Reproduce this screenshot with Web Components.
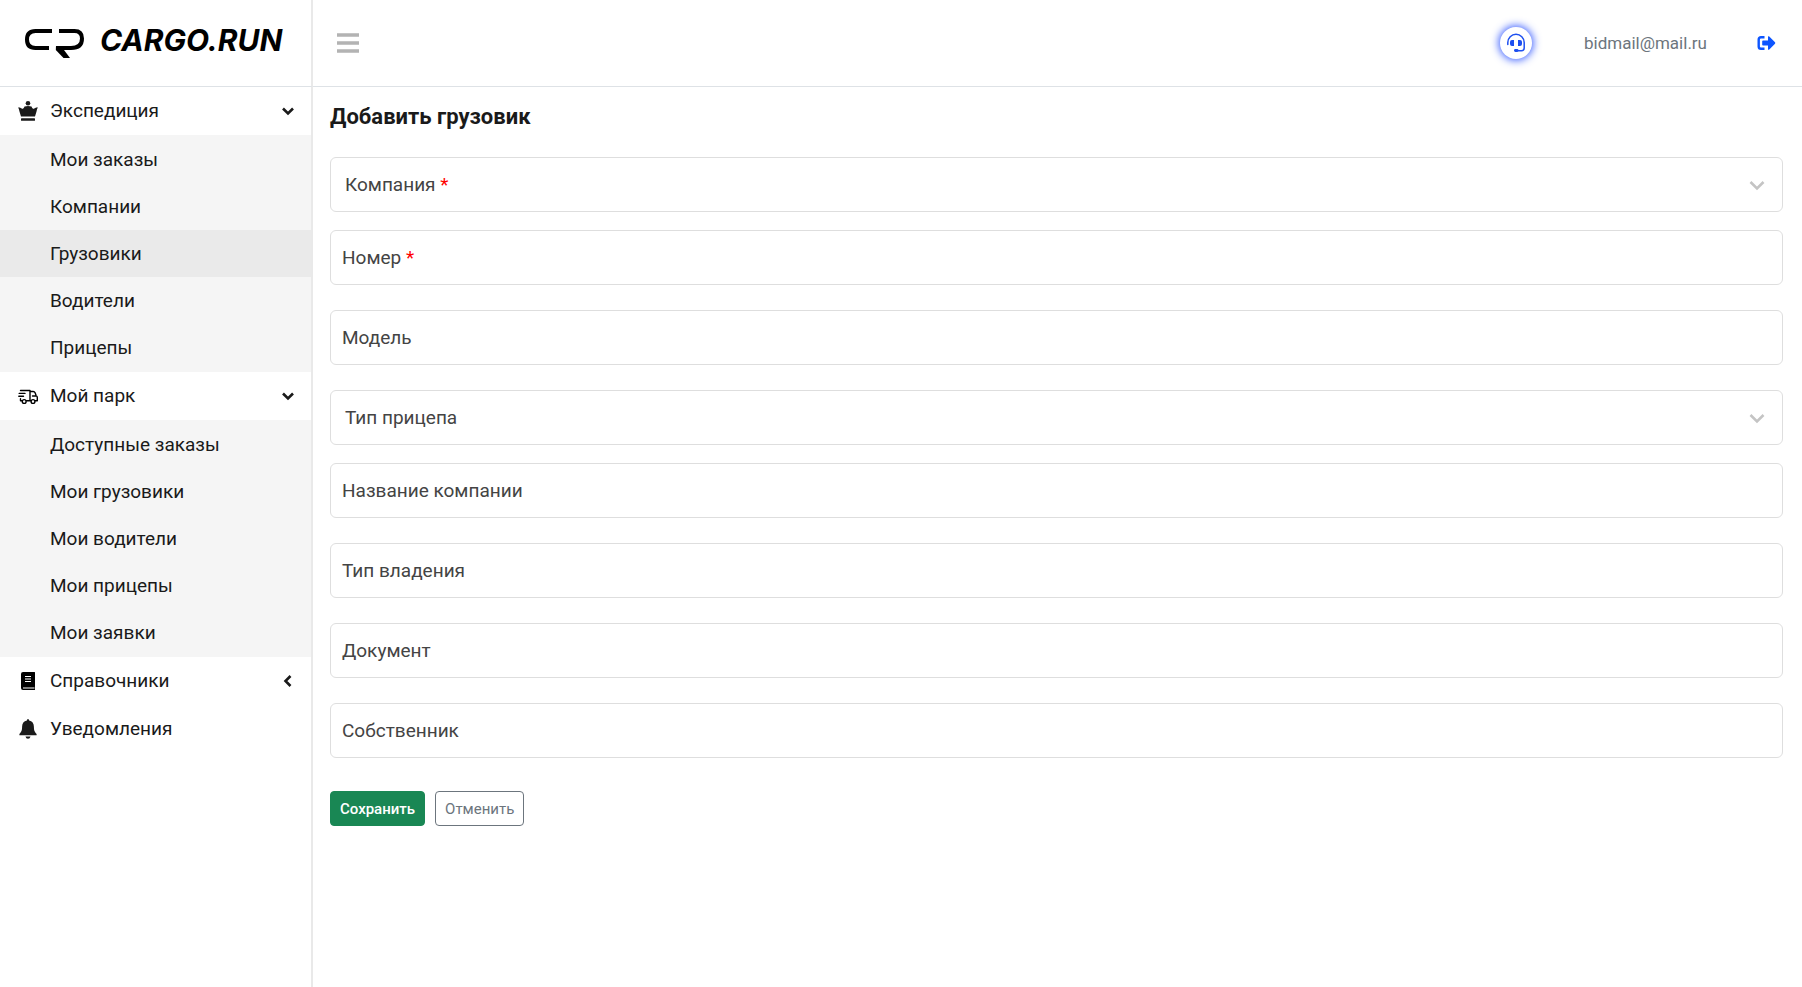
<!DOCTYPE html>
<html lang="ru">
<head>
<meta charset="utf-8">
<title>Добавить грузовик</title>
<style>
    body {
        margin: 0;
        background: #fff;
        color: #1a1a1a;
        font-family: Roboto, "Liberation Sans", sans-serif;
        font-size: 19px;
        line-height: 28px;
    }
</style>
</head>
<body>
<cargo-shell>
    <cargo-logo slot="logo"></cargo-logo>
    <nav slot="menu" aria-label="Меню">
        <menu-group label="Экспедиция" icon="crown" open>
            <menu-item>Мои заказы</menu-item>
            <menu-item>Компании</menu-item>
            <menu-item active>Грузовики</menu-item>
            <menu-item>Водители</menu-item>
            <menu-item>Прицепы</menu-item>
        </menu-group>
        <menu-group label="Мой парк" icon="truck" open>
            <menu-item>Доступные заказы</menu-item>
            <menu-item>Мои грузовики</menu-item>
            <menu-item>Мои водители</menu-item>
            <menu-item>Мои прицепы</menu-item>
            <menu-item>Мои заявки</menu-item>
        </menu-group>
        <menu-group label="Справочники" icon="book"></menu-group>
        <menu-group label="Уведомления" icon="bell" plain></menu-group>
    </nav>
    <top-bar slot="header" email="bidmail@mail.ru"></top-bar>
    <truck-form heading="Добавить грузовик">
        <form-field type="select" label="Компания" required></form-field>
        <form-field label="Номер" required></form-field>
        <form-field label="Модель"></form-field>
        <form-field type="select" label="Тип прицепа"></form-field>
        <form-field label="Название компании"></form-field>
        <form-field label="Тип владения"></form-field>
        <form-field label="Документ"></form-field>
        <form-field label="Собственник"></form-field>
        <action-button slot="actions" variant="success">Сохранить</action-button>
        <action-button slot="actions" variant="outline">Отменить</action-button>
    </truck-form>
</cargo-shell>

<script>
(function () {
    const icons = {
        crown: `<svg width="20" height="20" viewBox="0 0 20 20" fill="currentColor">
            <circle cx="10" cy="2.3" r="2.3"/>
            <path d="M0 6.6c1.6-.6 3 .2 4 1.2 1.2-.2 2-.9 2.5-2.4L10 4.9l3.5.5c.5 1.5 1.3 2.2 2.5 2.4 1-1 2.4-1.8 4-1.2-.8 1-1 2-1.4 3.6L17 15.6H3L1.400 10.200C1 8.600.8 7.600 0 6.600z"/>
            <rect x="3" y="17.3" width="14" height="2.5" rx=".6"/>
        </svg>`,
        truck: `<svg width="20" height="20" viewBox="0 0 20 20" fill="none" stroke="#000" stroke-width="1.4" stroke-linejoin="round" stroke-linecap="round">
            <path d="M2.500 4.500H12V14.800M1.200 7.400h5.800M.8 10.200h4.700M2.500 12.800v2h1.500M8.500 14.800h4.500M12 5.500h3.200c1 0 1.500.4 1.900 1.300l1.100 3c.8.300 1.100.8 1.100 1.600v3.400h-2M18 10h-3.500"/>
            <circle cx="6.200" cy="15.500" r="1.900"/><circle cx="15" cy="15.500" r="1.900"/>
        </svg>`,
        book: `<svg width="20" height="20" viewBox="0 0 20 20">
            <path fill="#000" d="M5 1h11.500q.5 0 .5.500V15.500q-.8 1.500 0 3v.500H5q-2 0-2-2V3q0-2 2-2z"/>
            <path stroke="#fff" d="M7 5.500h6M7 8h6M7 10.500h6M5 17h11" stroke-width="1.200"/>
        </svg>`,
        bell: `<svg width="20" height="20" viewBox="0 0 20 20" fill="currentColor">
            <path d="M10 0q1.100 0 1.100 1.600c3.100.6 4.800 2.900 4.800 6.100 0 4 .8 5 2.700 7.300V16.200H1.400V15c1.900-2.300 2.700-3.300 2.700-7.300 0-3.200 1.700-5.500 4.800-6.100Q8.900 0 10 0zM7.500 17.500h5q-.5 2.200-2.500 2.200t-2.500-2.200z"/>
        </svg>`,
        chevron: `<svg width="14" height="14" viewBox="0 0 14 14" fill="none" stroke="currentColor" stroke-width="2.6">
            <path d="M2 4.500 7 9.500l5-5"/>
        </svg>`,
        chevronThin: `<svg width="18" height="18" viewBox="0 0 18 18" fill="none" stroke="currentColor" stroke-width="2.6">
            <path d="M2.500 6 9 12.500 15.500 6"/>
        </svg>`
    };

    function attach(element, html) {
        element.attachShadow({ mode: 'open' }).innerHTML = html;
    }

    class CargoShell extends HTMLElement {
        connectedCallback() {
            attach(this, `
                <style>
                    :host {
                        display: grid;
                        grid-template-columns: 313px minmax(0, 1fr);
                        grid-template-rows: 87px 1fr;
                        min-height: 100vh;
                    }
                    .logo, .header {
                        box-sizing: border-box;
                        border-bottom: 1px solid #dee2e6;
                    }
                    .logo, .menu { border-right: 2px solid #e9e9e9; }
                    main { padding: 16px 19px 24px 17px; }
                </style>
                <div class="logo"><slot name="logo"></slot></div>
                <header class="header"><slot name="header"></slot></header>
                <aside class="menu"><slot name="menu"></slot></aside>
                <main><slot></slot></main>
            `);
        }
    }

    class CargoLogo extends HTMLElement {
        connectedCallback() {
            attach(this, `
                <style>
                    :host { display: block; }
                    a {
                        display: flex;
                        align-items: center;
                        gap: 15px;
                        height: 80px;
                        padding-left: 25px;
                        color: #000;
                        text-decoration: none;
                        font: italic 700 30px/36px Inter, sans-serif;
                    }
                    svg { flex: none; margin-top: 8px; }
                </style>
                <a href="#">
                    <svg width="60" height="30" viewBox="0 0 60 30" fill="none" stroke="#000" stroke-width="4" aria-hidden="true">
                        <path d="M27 2H10.500Q2 2 2 10.500T10.500 19H24M34 2H49.500Q57 2 57 9.500 57 19 46 19H31"/>
                        <path fill="#000" stroke="none" d="M31 17h5l9 12h-6.500l-7.700-8z"/>
                    </svg>
                    <span>CARGO.RUN</span>
                </a>
            `);
        }
    }

    class TopBar extends HTMLElement {
        connectedCallback() {
            attach(this, `
                <style>
                    :host {
                        display: flex;
                        align-items: center;
                        height: 86px;
                        padding: 0 26px 0 23px;
                        color: #6c757d;
                        font-size: 17px;
                    }
                    button {
                        display: grid;
                        place-items: center;
                        padding: 0;
                        border: 0;
                        background: none;
                        color: #0d55ff;
                        cursor: pointer;
                    }
                    .support {
                        width: 32px;
                        height: 32px;
                        margin-left: auto;
                        border-radius: 50%;
                        background: #fff;
                        box-shadow: 0 0 8px 1px #2f55ff;
                        color: #1d4ff0;
                    }
                    .email { margin: 0 49px 0 52px; }
                </style>
                <button type="button" aria-label="Меню">
                    <svg width="24" height="24" viewBox="0 0 24 24"><path stroke="#b3b3b3" stroke-width="3.4" d="M1 4h22M1 12h22M1 20h22"/></svg>
                </button>
                <button type="button" class="support" aria-label="Поддержка">
                    <svg width="20" height="20" viewBox="0 0 20 20" fill="none" stroke="currentColor" stroke-width="1.5">
                        <path d="M1.800 11.500V9.500a8.200 8.200 0 0 1 16.400 0V15q0 2.700-2.700 2.700H10" stroke-linecap="round"/>
                        <path fill="currentColor" stroke="none" d="M4 9q0-2 2-2h2v6H6q-2 0-2-2zM16 9q0-2-2-2h-2v6h2q2 0 2-2z"/>
                        <rect x="8" y="16" width="4.500" height="3" rx="1.400" fill="currentColor" stroke="none"/>
                    </svg>
                </button>
                <span class="email">${this.getAttribute('email')}</span>
                <button type="button" aria-label="Выйти">
                    <svg width="20" height="20" viewBox="0 0 20 20">
                        <path fill="none" stroke="currentColor" stroke-width="2.4" d="M8.500 4.200H5Q2.700 4.200 2.700 6.500v7Q2.700 15.800 5 15.800h3.500"/>
                        <path fill="currentColor" d="M7 7.500h5V3.600q.5-.8 1.300-.2L19 9.200q.6.800 0 1.600l-5.700 5.800q-.8.600-1.300-.2v-3.900H7q-.8 0-.8-.8V8.300q0-.8.800-.8z"/>
                    </svg>
                </button>
            `);
        }
    }

    class MenuGroup extends HTMLElement {
        connectedCallback() {
            const open = this.hasAttribute('open');
            const arrow = this.hasAttribute('plain') ? '' : `<span class="arrow">${icons.chevron}</span>`;
            attach(this, `
                <style>
                    :host { display: block; }
                    button {
                        display: flex;
                        align-items: center;
                        gap: 12px;
                        width: 100%;
                        height: 48px;
                        padding: 0 16px 0 18px;
                        border: 0;
                        background: none;
                        color: inherit;
                        font: inherit;
                        text-align: left;
                        cursor: pointer;
                    }
                    svg { display: block; }
                    .arrow { margin-left: auto; transform: rotate(90deg); }
                    :host([open]) .arrow { transform: none; }
                    .items {
                        display: none;
                        padding: 1px 0;
                        background: #f5f5f5;
                    }
                    :host([open]) .items { display: block; }
                </style>
                <button type="button" ${arrow ? `aria-expanded="${open}"` : ''}>
                    ${icons[this.getAttribute('icon')]}
                    <span>${this.getAttribute('label')}</span>
                    ${arrow}
                </button>
                <div class="items"><slot></slot></div>
            `);
            if (!arrow) return;
            const button = this.shadowRoot.querySelector('button');
            button.addEventListener('click', () => {
                button.setAttribute('aria-expanded', this.toggleAttribute('open'));
            });
        }
    }

    class MenuItem extends HTMLElement {
        connectedCallback() {
            attach(this, `
                <style>
                    :host { display: block; }
                    :host([active]) { background: #eaeaea; }
                    a {
                        display: block;
                        padding-left: 50px;
                        color: inherit;
                        line-height: 47px;
                        text-decoration: none;
                    }
                </style>
                <a href="#"><slot></slot></a>
            `);
        }
    }

    class TruckForm extends HTMLElement {
        connectedCallback() {
            attach(this, `
                <style>
                    :host { display: block; }
                    h1 {
                        margin: 0 0 26px;
                        font-size: 22px;
                        font-weight: 700;
                        line-height: 28px;
                    }
                    .actions {
                        display: flex;
                        gap: 10px;
                        padding-top: 8px;
                    }
                </style>
                <h1>${this.getAttribute('heading')}</h1>
                <form>
                    <slot></slot>
                    <div class="actions"><slot name="actions"></slot></div>
                </form>
            `);
        }
    }

    class FormField extends HTMLElement {
        connectedCallback() {
            const isSelect = this.getAttribute('type') === 'select';
            const required = this.hasAttribute('required');
            const control = isSelect
                ? `<select id="control"><option value=""></option></select>${icons.chevronThin}`
                : '<input id="control" type="text" placeholder=" ">';
            attach(this, `
                <style>
                    :host {
                        display: grid;
                        align-items: center;
                        margin-bottom: 25px;
                        color: #444;
                    }
                    :host([type="select"]) { margin-bottom: 18px; }
                    label, select, input, svg { grid-area: 1 / 1; }
                    select, input {
                        appearance: none;
                        box-sizing: border-box;
                        width: 100%;
                        height: 55px;
                        margin: 0;
                        padding: 0 12px;
                        border: 1px solid #dedede;
                        border-radius: 6px;
                        background: #fff;
                        color: inherit;
                        font: inherit;
                    }
                    label {
                        z-index: 1;
                        justify-self: start;
                        padding-left: 12px;
                        pointer-events: none;
                    }
                    :host([type="select"]) label { padding-left: 15px; }
                    input:not(:placeholder-shown) + label { display: none; }
                    svg {
                        justify-self: end;
                        margin-right: 17px;
                        color: #c4c4c4;
                        pointer-events: none;
                    }
                    .mark { color: #f00; }
                </style>
                ${control}
                <label for="control">${this.getAttribute('label')}${required ? ' <span class="mark">*</span>' : ''}</label>
            `);
        }
    }

    class ActionButton extends HTMLElement {
        connectedCallback() {
            attach(this, `
                <style>
                    :host { display: block; }
                    button {
                        height: 35px;
                        padding: 0 9px;
                        border: 1px solid #6c757d;
                        border-radius: 4px;
                        background: #fff;
                        color: #6c757d;
                        font: inherit;
                        font-size: 15px;
                        cursor: pointer;
                    }
                    :host([variant="success"]) button {
                        border-color: #198754;
                        background: #198754;
                        color: #fff;
                        font-weight: 500;
                    }
                </style>
                <button type="button"><slot></slot></button>
            `);
        }
    }

    customElements.define('cargo-shell', CargoShell);
    customElements.define('cargo-logo', CargoLogo);
    customElements.define('top-bar', TopBar);
    customElements.define('menu-group', MenuGroup);
    customElements.define('menu-item', MenuItem);
    customElements.define('truck-form', TruckForm);
    customElements.define('form-field', FormField);
    customElements.define('action-button', ActionButton);
}());
</script>
</body>
</html>
